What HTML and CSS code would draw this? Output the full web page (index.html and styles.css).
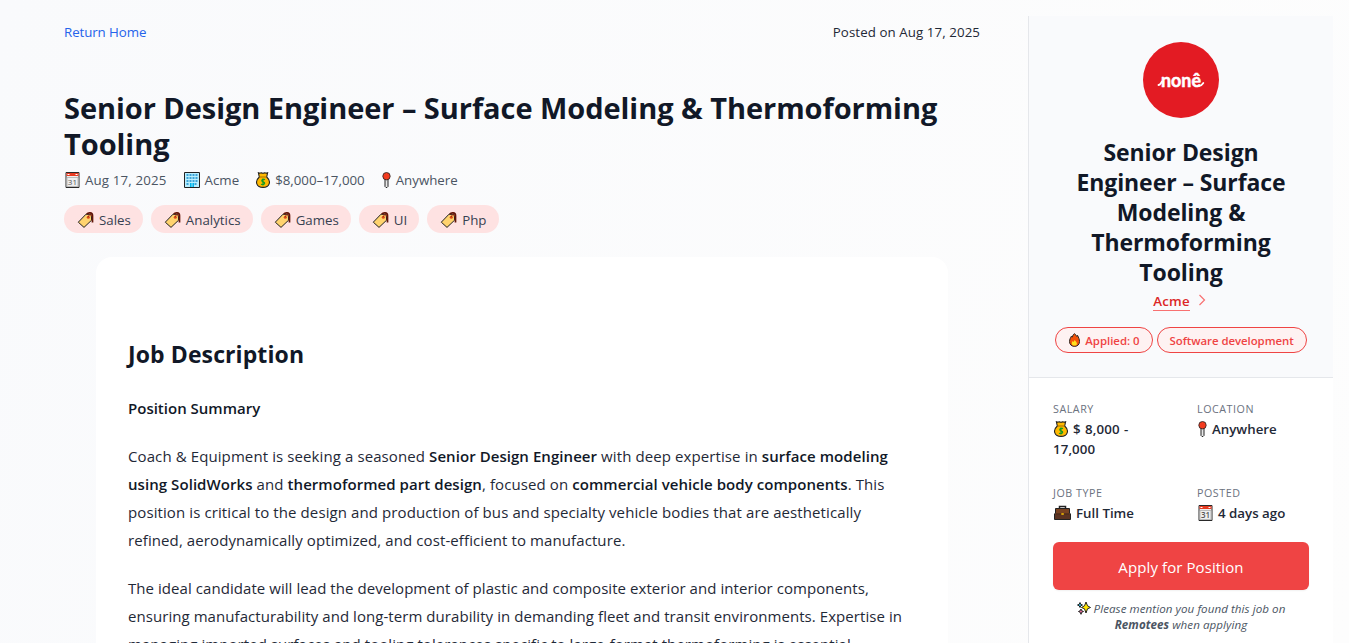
FILE: index.html
```html
<!DOCTYPE html>
<html lang="en">
<head>
    <meta charset="UTF-8">
    <meta name="viewport" content="width=device-width, initial-scale=1.0">
    <title>Senior Design Engineer – Surface Modeling &amp; Thermoforming Tooling</title>
    <link rel="stylesheet" href="styles.css">
</head>
<body>
    <!-- Icons -->
    <svg class="sprite" xmlns="http://www.w3.org/2000/svg">
        <symbol id="calendar" viewBox="0 0 16 16">
            <path fill="#eee" stroke="#292929" d="M1.500.500h13v15h-13z"/>
            <path fill="#e83b22" d="M2 1h12v3H2z"/>
            <path stroke="#fff" d="M3 2.500h2m6 0h2"/>
            <path fill="none" stroke="#bbb" d="M2.500 5.500h11v9h-11z"/>
            <text x="8" y="13" text-anchor="middle" font-family="Open Sans, sans-serif" font-size="8" fill="#555">31</text>
        </symbol>
        <symbol id="building" viewBox="0 0 16 16">
            <path fill="#b9efff" stroke="#222" d="M.500.500h15v15H.500z"/>
            <path stroke="#3da4d8" stroke-width="2" stroke-dasharray="2 1" d="M2.500 3h12M2.500 6h12M2.500 9h12M2.500 12h3m5 0h3"/>
            <path fill="#00b7ed" d="M6 11h4v4H6z"/>
            <path stroke="#d7f7ff" stroke-width=".7" d="M8 11v4"/>
        </symbol>
        <symbol id="money" viewBox="0 0 14 16">
            <path fill="#ffb900" stroke="#222" stroke-width="1.1" d="M2.400.8c1.100.5 2 .3 2.800 0 1.100.6 2.400.6 3.600 0 .8.4 1.800.4 2.800 0L10.700 5c5 4.500 2.800 10.400-3.700 10.400S-1.700 9.500 3.300 5z"/>
            <path stroke="#a56c00" d="M3.500 5h7"/>
            <path fill="none" stroke="#169b21" stroke-width="1.200" d="M9 7.600C6 6.200 4.600 9.400 7 9.800c3 .5 1.500 3.900-2 2.500M7 6.500v7"/>
        </symbol>
        <symbol id="pin" viewBox="0 0 10 16">
            <path fill="#e8e8e8" stroke="#252525" d="M3.500 7h3v7.500l-1 1h-1l-1-1z"/>
            <circle cx="5" cy="4.200" r="3.700" fill="#f33b1f" stroke="#252525" stroke-width=".8"/>
        </symbol>
        <symbol id="tag" viewBox="0 0 16 16">
            <path fill="#ffd36e" stroke="#222" stroke-linejoin="round" d="m.8 10.200 7.700-8 5.200.300.500 5.600-7.700 7.300z"/>
            <circle cx="10.800" cy="5.300" r="1.500" fill="#db4c16"/>
            <path fill="none" stroke="#611408" stroke-width="1.700" d="M9.300 2.300C10.500.4 15 0 15 3.500v7"/>
            <path fill="none" stroke="#a92d13" d="M10.800 5c.2-2.500 2.700-3 3.200-1"/>
        </symbol>
        <symbol id="fire" viewBox="0 0 12 14">
            <path fill="#f45209" stroke="#2c2724" d="M6 .7c1.600.8 1.500 2.500 2.500 2.800L9 2.300c1.200 2.500 2 4 2 6.200 0 3-2 4.900-5 4.900s-5-2-5-4.900C1 6.500 2 5 2.500 3.500L4 4C4 2.500 5 1.200 6 .7z"/>
            <path fill="#ffe11b" d="M6 7c3 2.500 3.500 5.600 0 5.600S3 9.500 4.200 8l1 1z"/>
        </symbol>
        <symbol id="briefcase" viewBox="0 0 17 16">
            <path fill="none" stroke="#222" stroke-width="1.500" d="M5.500 4V1.500h6V4"/>
            <path fill="#794221" stroke="#222" d="M1.500 3.500h14V8l1 1v5.500H.500V9l1-1z"/>
            <path fill="#5b3322" d="M1 9.500h15V14H1z"/>
            <path stroke="#3a2018" d="M1.500 9h14"/>
            <path stroke="#ffc400" stroke-width="1.500" d="M7.300 9h2.500"/>
        </symbol>
        <symbol id="sparkles" viewBox="0 0 14 14">
            <path fill="#31b8df" stroke="#222" d="m3 1.500.8 1.800 1.700.7-1.700.8L3 6.500l-.8-1.700L.5 4l1.700-.7z"/>
            <path fill="#ea6a9b" stroke="#222" d="m4 8 .7 1.700 1.800.8-1.800.8-.7 2-.8-2-1.700-.8 1.700-.8z"/>
            <path fill="#ffe600" stroke="#222" d="m9 1 1.500 3.800L13.500 6.500l-3 1.300L9 12 7.500 7.800l-3-1.300 3-1.700z"/>
        </symbol>
    </svg>

    <div class="page">
        <!-- Job details -->
        <main class="job">
            <div class="topbar">
                <a href="#">Return Home</a>
                <span>Posted on Aug 17, 2025</span>
            </div>

            <h1>Senior Design Engineer – Surface Modeling &amp; Thermoforming<br>Tooling</h1>

            <div class="meta">
                <span class="date"><svg class="icon"><use href="#calendar"/></svg>Aug 17, 2025</span>
                <span><svg class="icon building"><use href="#building"/></svg>Acme</span>
                <span><svg class="icon money"><use href="#money"/></svg>$8,000–17,000</span>
                <span><svg class="icon pin"><use href="#pin"/></svg>Anywhere</span>
            </div>

            <div class="tags">
                <span class="tag"><svg class="icon"><use href="#tag"/></svg>Sales</span>
                <span class="tag"><svg class="icon"><use href="#tag"/></svg>Analytics</span>
                <span class="tag"><svg class="icon"><use href="#tag"/></svg>Games</span>
                <span class="tag"><svg class="icon"><use href="#tag"/></svg>UI</span>
                <span class="tag"><svg class="icon"><use href="#tag"/></svg>Php</span>
            </div>

            <article class="description">
                <h2>Job Description</h2>
                <h3>Position Summary</h3>
                <p>Coach &amp; Equipment is seeking a seasoned <strong>Senior Design Engineer</strong> with deep expertise in <strong>surface modeling<br>using SolidWorks</strong> and <strong>thermoformed part design</strong>, focused on <strong>commercial vehicle body components</strong>. This<br>position is critical to the design and production of bus and specialty vehicle bodies that are aesthetically<br>refined, aerodynamically optimized, and cost-efficient to manufacture.</p>
                <p>The ideal candidate will lead the development of plastic and composite exterior and interior components,<br>ensuring manufacturability and long-term durability in demanding fleet and transit environments. Expertise in<br>managing imported surfaces and tooling tolerances specific to large-format thermoforming is essential.</p>
            </article>
        </main>

        <!-- Sidebar -->
        <aside class="sidebar">
            <div class="company">
                <svg class="logo" viewBox="0 0 76 76">
                    <circle cx="38" cy="38" r="38" fill="#e31b23"/>
                    <text x="18" y="45" textLength="40" lengthAdjust="spacingAndGlyphs">nonê</text>
                    <path d="M15.500 43c1.500 0 2-1.500 3.500-3.500M56 44c2 0 3-1 4.300-3" fill="none" stroke="#fff" stroke-width="1.800" stroke-linecap="round"/>
                </svg>
                <h2>Senior Design<br>Engineer – Surface<br>Modeling &amp;<br>Thermoforming<br>Tooling</h2>
                <div class="company-link">
                    <a href="#">Acme</a>
                    <svg viewBox="0 0 8 12"><path d="m1.500 1 5 5-5 5"/></svg>
                </div>
                <div class="badges">
                    <span class="badge"><svg class="icon fire"><use href="#fire"/></svg>Applied: 0</span>
                    <span class="badge category">Software development</span>
                </div>
            </div>

            <div class="facts">
                <div>
                    <h4>SALARY</h4>
                    <p class="salary"><svg class="icon money"><use href="#money"/></svg>$ 8,000 -<br>17,000</p>
                </div>
                <div>
                    <h4>LOCATION</h4>
                    <p><svg class="icon pin"><use href="#pin"/></svg>Anywhere</p>
                </div>
                <div>
                    <h4>JOB TYPE</h4>
                    <p><svg class="icon case"><use href="#briefcase"/></svg>Full Time</p>
                </div>
                <div>
                    <h4>POSTED</h4>
                    <p><svg class="icon"><use href="#calendar"/></svg>4 days ago</p>
                </div>
            </div>

            <div class="apply">
                <a href="#" class="apply-button">Apply for Position</a>
                <p><svg class="icon sparkles"><use href="#sparkles"/></svg>Please mention you found this job on<br><strong>Remotees</strong> when applying</p>
            </div>
        </aside>
    </div>
</body>
</html>
```
FILE: styles.css
```css
* {
    margin: 0;
    padding: 0;
    box-sizing: border-box;
}

html {
    height: 100%;
    overflow: hidden;
}

body {
    height: 100%;
    overflow: hidden;
    background: linear-gradient(109deg, #f9fafc, #fdfdfd);
    color: #1f2937;
    font-family: "Segoe UI", "Open Sans", sans-serif;
    font-size: 15px;
}

a {
    text-decoration: none;
}

.sprite {
    display: none;
}

.icon {
    width: 17px;
    height: 16px;
    flex: none;
}

.icon.building {
    width: 18px;
}

.icon.money {
    width: 16px;
}

.icon.pin {
    width: 11px;
}

.page {
    display: grid;
    grid-template-columns: 916px 305px;
    gap: 48px;
    padding: 16px 16px 0 64px;
}

/* Job details */
.topbar {
    display: flex;
    justify-content: space-between;
    padding-top: 6px;
    font-size: 13.3px;
    line-height: 20px;
}

.topbar a {
    color: #2563eb;
    letter-spacing: -.08px;
}

.topbar span {
    letter-spacing: .08px;
}

.job h1 {
    margin-top: 48px;
    color: #111827;
    font-size: 29px;
    line-height: 36px;
    letter-spacing: -.05px;
    white-space: nowrap;
}

.meta {
    display: flex;
    gap: 16px;
    margin-top: 8px;
    color: #4b5563;
    font-size: 13.3px;
    line-height: 20px;
}

.meta span,
.tag {
    display: flex;
    align-items: center;
    gap: 4px;
}

.meta .date {
    letter-spacing: .15px;
}

.tags {
    display: flex;
    gap: 8px;
    margin-top: 15px;
}

.tag {
    height: 28px;
    padding: 0 12px;
    border-radius: 14px;
    background: #fee2e2;
    color: #374151;
    font-size: 13.3px;
    line-height: 28px;
    padding-top: 1px;
}

.tag .icon {
    width: 19px;
}

.description {
    width: 852px;
    height: 800px;
    margin: 24px 32px 0;
    padding: 81px 32px 32px;
    border-radius: 16px;
    background: #fff;
    line-height: 28px;
    letter-spacing: .1px;
    white-space: nowrap;
}

.description h2 {
    color: #111827;
    font-size: 23px;
    line-height: 32px;
}

.description h3 {
    margin-top: 24px;
    color: #111827;
    font-size: 15px;
    font-weight: 600;
    letter-spacing: 0;
}

.description p {
    margin-top: 20px;
}

.description p + p {
    letter-spacing: .06px;
}

.description strong {
    color: #111827;
    font-weight: 600;
    letter-spacing: .06px;
}

/* Sidebar */
.sidebar {
    height: 800px;
    border-left: 1px solid #e5e7eb;
    background: #fff;
}

.company {
    display: flex;
    flex-direction: column;
    align-items: center;
    height: 362px;
    padding-top: 26px;
    border-bottom: 1px solid #e5e7eb;
    background: #f9fafc;
    text-align: center;
}

.logo {
    width: 76px;
    height: 76px;
}

.logo text {
    fill: #fff;
    stroke: #fff;
    stroke-width: .5px;
    stroke-linejoin: round;
    font-family: Lato, sans-serif;
    font-size: 18px;
    font-weight: 700;
}

.company h2 {
    margin-top: 19px;
    color: #111827;
    font-size: 23px;
    line-height: 30px;
    letter-spacing: -.08px;
}

.company-link {
    display: flex;
    gap: 8px;
    margin-top: 5px;
    font-size: 13.3px;
    font-weight: 600;
    line-height: 18px;
    letter-spacing: .2px;
    margin-right: 3px;
}

.company-link a {
    height: 19px;
    border-bottom: 1px solid #f87171;
    color: #dc2626;
}

.company-link svg {
    width: 8px;
    height: 12px;
    margin-top: 2px;
    fill: none;
    stroke: #f87171;
    stroke-width: 1.2;
}

.badges {
    display: flex;
    gap: 4px;
    margin-top: 16px;
}

.badge {
    display: flex;
    align-items: center;
    gap: 4px;
    height: 26px;
    padding: 0 12px;
    border: 1px solid #ef4444;
    border-radius: 13px;
    background: #fef2f2;
    color: #ef4444;
    font-size: 11.4px;
    font-weight: 600;
    white-space: nowrap;
}

.badge.category {
    letter-spacing: -.04px;
}

.icon.fire {
    width: 13px;
    height: 14px;
}

.facts {
    display: grid;
    grid-template-columns: 120px 112px;
    grid-template-rows: 60px 40px;
    gap: 24px;
    padding: 23px 23px 0 24px;
}

.facts h4 {
    color: #6b7280;
    font-size: 10.7px;
    font-weight: 400;
    line-height: 16px;
    letter-spacing: .55px;
}

.facts p {
    margin-top: 2px;
    font-size: 13.3px;
    font-weight: 600;
    line-height: 20px;
    white-space: nowrap;
}

.facts .salary {
    letter-spacing: .1px;
    word-spacing: .8px;
}

.facts .icon {
    margin-right: 4px;
    vertical-align: -3px;
}

.facts .icon.case {
    width: 19px;
}

.apply {
    padding: 17px 24px 0;
    text-align: center;
}

.apply-button {
    display: block;
    height: 48px;
    border-radius: 6px;
    background: #ef4444;
    box-shadow: 0 1px 2px rgba(0, 0, 0, .06);
    color: #fff;
    font-size: 15px;
    line-height: 50px;
    letter-spacing: .1px;
}

.apply p {
    margin-top: 11px;
    color: #4b5563;
    font-size: 11.6px;
    font-style: italic;
    line-height: 16px;
    letter-spacing: .06px;
    white-space: nowrap;
}

.icon.sparkles {
    width: 14px;
    height: 14px;
    margin-right: 3px;
    vertical-align: -2px;
}
```
